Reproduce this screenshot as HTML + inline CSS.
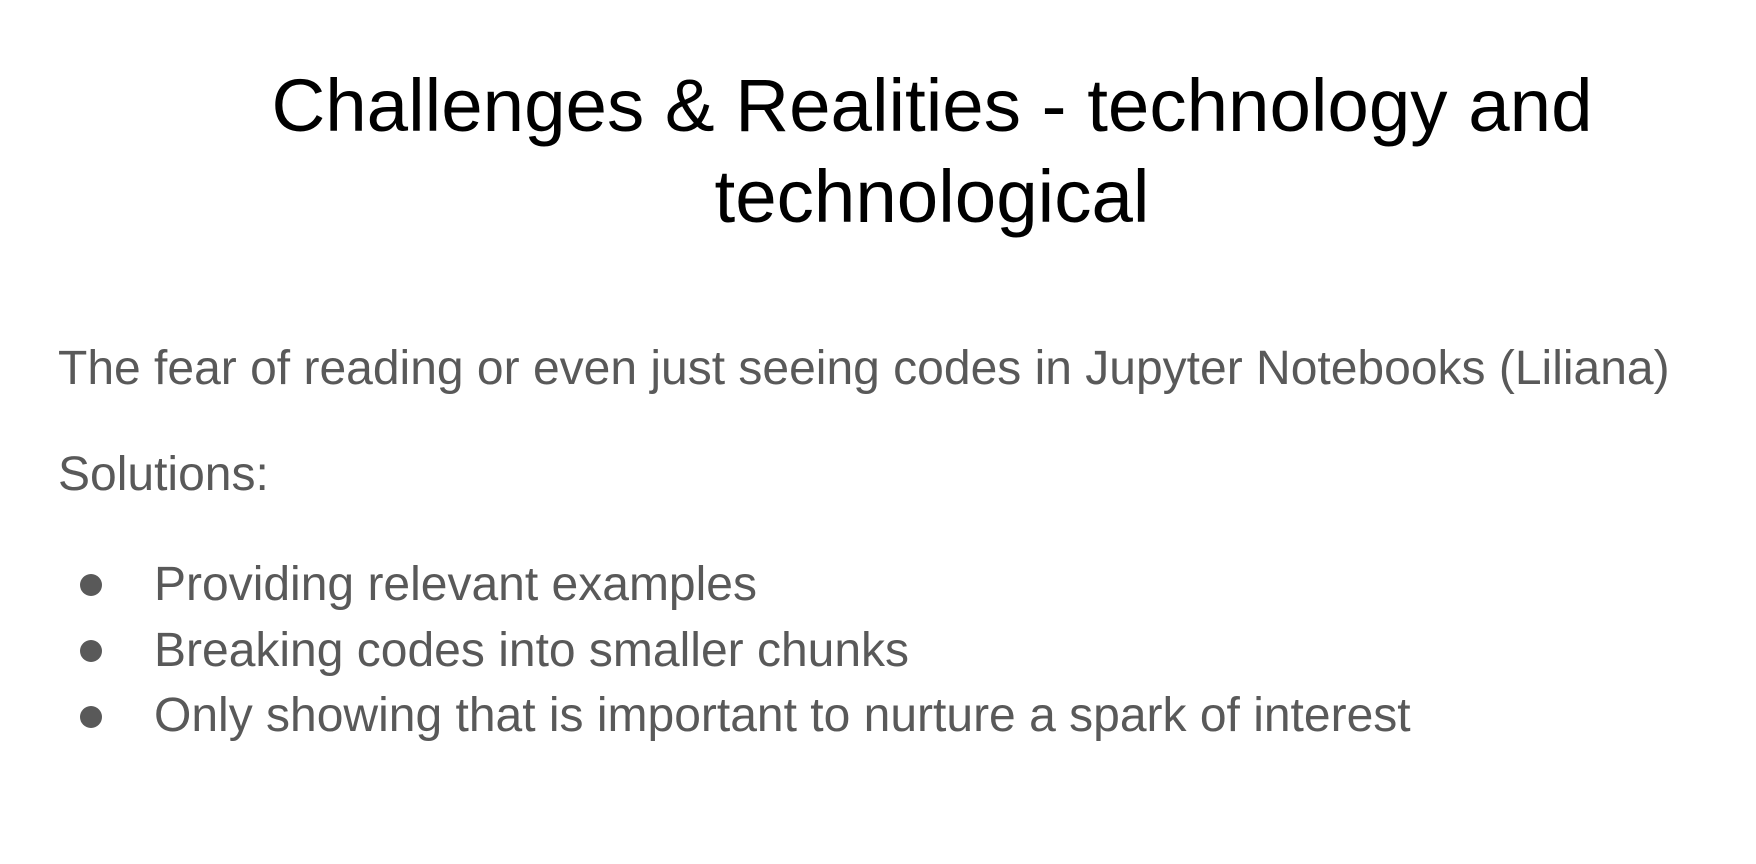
<!DOCTYPE html>
<html><head><meta charset="utf-8"><style>
html,body{margin:0;padding:0;background:#fff;width:1756px;height:864px;overflow:hidden;position:relative;font-family:"Liberation Sans",Arial,sans-serif}
.t{position:absolute;left:0;width:1864px;text-align:center;font-size:74.5px;line-height:77px;color:#000;white-space:nowrap}
.b{position:absolute;left:58px;font-size:48px;line-height:47px;color:#595959;white-space:nowrap}
.d{position:absolute;left:80px;width:22px;height:22px;border-radius:50%;background:#595959}
</style></head><body>
<div class="t" style="top:67px">Challenges &amp; Realities - technology and</div>
<div class="t" style="top:158px">technological</div>
<div class="b" style="top:345px">The fear of reading or even just seeing codes in Jupyter Notebooks (Liliana)</div>
<div class="b" style="top:451px">Solutions:</div>
<div class="d" style="top:574px"></div>
<div class="b" style="top:561px;left:154px">Providing relevant examples</div>
<div class="d" style="top:640px"></div>
<div class="b" style="top:627px;left:154px">Breaking codes into smaller chunks</div>
<div class="d" style="top:706px"></div>
<div class="b" style="top:692px;left:154px">Only showing that is important to nurture a spark of interest</div>
</body></html>
